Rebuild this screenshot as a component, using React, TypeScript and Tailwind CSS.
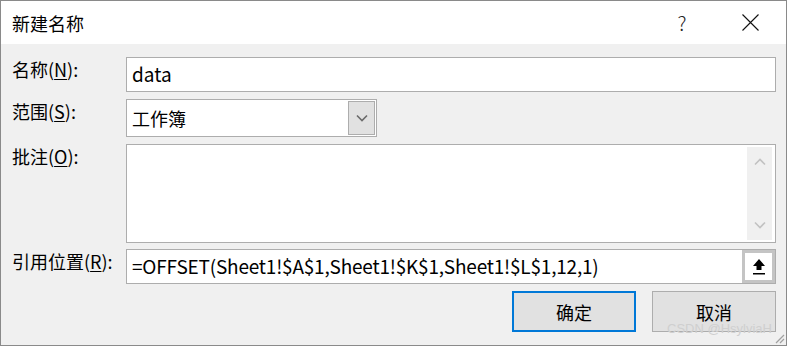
const font = { fontFamily: '"Noto Sans CJK SC", "Noto Sans", sans-serif' };

function Label({ text, letter }: { text: string; letter: string }) {
  return (
    <div className="w-[114px] shrink-0 text-[18px] leading-[24px] text-black">
      {text}(<span className="underline underline-offset-2">{letter}</span>):
    </div>
  );
}

function ChevronDown({ className }: { className?: string }) {
  return (
    <svg width="12" height="8" viewBox="0 0 12 8" className={className}>
      <path d="M1 1.5 L6 6.5 L11 1.5" fill="none" stroke="currentColor" strokeWidth="1.6" />
    </svg>
  );
}

function ChevronUp({ className }: { className?: string }) {
  return (
    <svg width="12" height="8" viewBox="0 0 12 8" className={className}>
      <path d="M1 6.5 L6 1.5 L11 6.5" fill="none" stroke="currentColor" strokeWidth="1.6" />
    </svg>
  );
}

export default function App() {
  return (
    <div
      className="relative flex h-[346px] w-[787px] flex-col border border-[#8a8a8a] bg-[#f0f0f0] text-black"
      style={font}
    >
      {/* title bar */}
      <div className="flex h-[43px] shrink-0 items-center bg-white pl-[11px]">
        <div className="flex-1 text-[18px] leading-none">新建名称</div>
        <div className="flex w-[76px] justify-center text-[20px] font-light leading-none text-[#222]">?</div>
        <div className="flex w-[66px] justify-center pr-[6px]">
          <svg width="17" height="17" viewBox="0 0 17 17">
            <path d="M0.5 0.5 L16.5 16.5 M16.5 0.5 L0.5 16.5" stroke="#111" strokeWidth="1.1" />
          </svg>
        </div>
      </div>

      <div className="flex flex-col pl-[11px] pr-[10px] pt-[13px]">
        {/* name */}
        <div className="flex items-start">
          <Label text="名称" letter="N" />
          <div className="flex h-[35px] flex-1 items-center border border-[#adadad] bg-white pl-[5px] text-[19px]">
            data
          </div>
        </div>

        {/* scope */}
        <div className="mt-[7px] flex items-start">
          <Label text="范围" letter="S" />
          <div className="flex h-[38px] w-[251px] items-center border border-[#adadad] bg-white pl-[5px] pr-[1px]">
            <span className="flex-1 text-[18px]">工作簿</span>
            <div className="flex h-[34px] w-[27px] items-center justify-center border border-[#adadad] bg-[#e1e1e1] text-[#6a6a6a]">
              <ChevronDown />
            </div>
          </div>
        </div>

        {/* comment */}
        <div className="mt-[7px] flex items-start">
          <Label text="批注" letter="O" />
          <div className="flex h-[99px] flex-1 justify-end border border-[#adadad] bg-white pr-[3px] pt-[2px]">
            <div className="flex h-[93px] w-[25px] flex-col items-center justify-between bg-[#f0f0f0] py-[11px] text-[#c2c2c2]">
              <ChevronUp />
              <ChevronDown />
            </div>
          </div>
        </div>

        {/* refers to */}
        <div className="mt-[6px] flex items-start">
          <Label text="引用位置" letter="R" />
          <div className="flex h-[35px] flex-1 items-center border border-[#adadad] bg-white pl-[5px]">
            <span className="flex-1 text-[19px] tracking-[-0.2px]">
              =OFFSET(Sheet1!$A$1,Sheet1!$K$1,Sheet1!$L$1,12,1)
            </span>
            <div className="flex h-[33px] w-[33px] items-center justify-center border-[3px] border-[#c4c4c4] bg-white">
              <svg width="14" height="18" viewBox="0 0 14 18">
                <path d="M7 1 L13 8 L9.5 8 L9.5 12 L4.5 12 L4.5 8 L1 8 Z" fill="#000" />
                <rect x="1" y="15" width="12" height="1.5" fill="#000" />
              </svg>
            </div>
          </div>
        </div>

        {/* buttons */}
        <div className="mt-[7px] flex justify-end gap-[16px]">
          <button className="flex h-[41px] w-[124px] items-center justify-center border-2 border-[#0078d7] bg-[#e1e1e1] text-[18px] leading-none">
            确定
          </button>
          <button className="flex h-[41px] w-[124px] items-center justify-center border border-[#adadad] bg-[#e1e1e1] text-[18px] leading-none">
            取消
          </button>
        </div>
      </div>

      {/* watermark */}
      <div
        className="absolute bottom-[10px] right-[14px] text-[13px] leading-none text-[#cfcfcf]"
        style={{ fontFamily: '"Liberation Sans", sans-serif' }}
      >
        CSDN @HsylviaH
      </div>

      {/* resize grip */}
      <svg className="absolute bottom-[1px] right-[1px]" width="12" height="12" viewBox="0 0 12 12">
        <path d="M11 3 L3 11 M11 7 L7 11" stroke="#a0a0a0" strokeWidth="1.2" />
      </svg>
    </div>
  );
}
